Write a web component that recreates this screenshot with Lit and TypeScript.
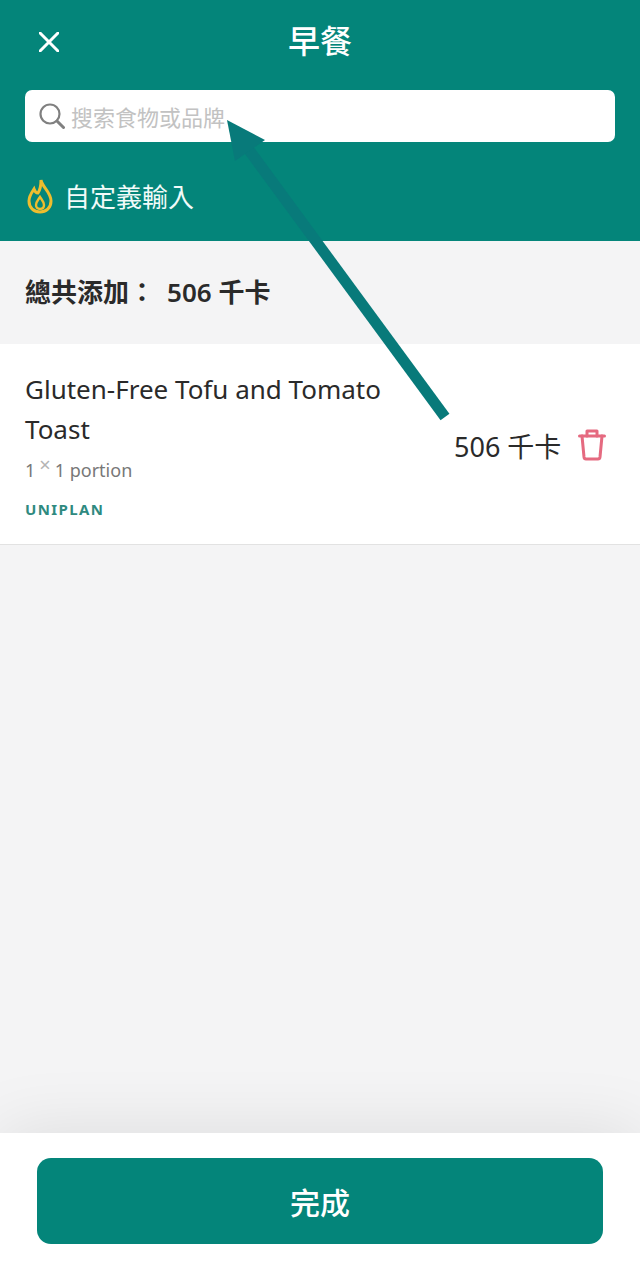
import { css, html, LitElement } from 'lit';
import { customElement } from 'lit/decorators.js';

const SANS = '"Noto Sans", "Noto Sans CJK TC", sans-serif';

@customElement('app-root')
export class AppRoot extends LitElement {
  static styles = css`
    *,
    *::after,
    *::before {
      box-sizing: border-box;
    }

    :host {
      display: flex;
      flex-direction: column;
      position: relative;
      width: 640px;
      height: 1280px;
      overflow: hidden;
      background: #f4f4f5;
      color: #2a2a2a;
      font-family: 'Noto Sans', 'Noto Sans CJK TC', sans-serif;
    }

    .header {
      height: 241px;
      padding: 0 25px;
      background: #04857a;
      color: #fff;
    }

    .title-row {
      height: 90px;
      padding-bottom: 8px;
      display: flex;
      align-items: center;
      justify-content: center;
      position: relative;
    }

    .title {
      font-size: 32px;
      font-weight: 500;
      line-height: 1;
    }

    .close {
      position: absolute;
      left: 14px;
      top: 32px;
      width: 20px;
      height: 20px;
    }

    .search {
      height: 52px;
      padding-left: 14px;
      display: flex;
      align-items: center;
      gap: 6px;
      background: #fff;
      border-radius: 7px;
      color: #c2c2c2;
      font-size: 22px;
    }

    .custom {
      height: 108px;
      display: flex;
      align-items: center;
      gap: 11px;
      padding: 0 0 0 2px;
      font-size: 26px;
      color: #f2fbf9;
    }

    .summary {
      height: 103px;
      padding: 0 25px 4px;
      display: flex;
      align-items: center;
      font-size: 26px;
      font-weight: 600;
    }

    .summary .amount {
      margin-left: 12px;
    }

    .item {
      height: 201px;
      padding: 25px 30px 0 25px;
      display: flex;
      background: #fff;
      border-bottom: 1px solid #e2e2e2;
    }

    .info {
      width: 429px;
    }

    .name {
      width: 390px;
      font-size: 26px;
      line-height: 40px;
    }

    .qty {
      margin-top: 9px;
      display: flex;
      align-items: flex-start;
      font-size: 18px;
      line-height: 24px;
      color: #787878;
    }

    .qty .times {
      margin: -5px 4px 0 4px;
      font-size: 20px;
      color: #b4b4b4;
    }

    .brand {
      margin-top: 17px;
      font-size: 15px;
      line-height: 20px;
      font-weight: 700;
      letter-spacing: 1.4px;
      color: #2f8a80;
    }

    .kcal {
      height: 152px;
      display: flex;
      align-items: center;
      gap: 17px;
      font-size: 27px;
      white-space: nowrap;
    }

    .spacer {
      flex: 1;
    }

    .footer {
      position: relative;
      height: 147px;
      padding: 25px 37px 0;
      background: #fff;
      box-shadow: 0 0 70px rgba(0, 0, 0, 0.1);
    }

    .done {
      height: 86px;
      display: flex;
      align-items: center;
      justify-content: center;
      background: #04857a;
      border-radius: 14px;
      color: #fff;
      font-size: 30px;
      font-weight: 500;
    }

    .arrow {
      position: absolute;
      left: 0;
      top: 0;
      pointer-events: none;
    }
  `;

  render() {
    return html`
      <div class="header">
        <div class="title-row">
          <svg class="close" viewBox="0 0 20 20">
            <path d="M1 1L19 19M19 1L1 19" stroke="#fff" stroke-width="3" stroke-linecap="round" />
          </svg>
          <div class="title">早餐</div>
        </div>
        <div class="search">
          <svg width="26" height="26" viewBox="0 0 26 26" fill="none" stroke="#808080">
            <circle cx="11" cy="11" r="9.5" stroke-width="2.2" />
            <path d="M18 18L24.5 24.5" stroke-width="3" stroke-linecap="round" />
          </svg>
          <span>搜索食物或品牌</span>
        </div>
        <div class="custom">
          <svg width="26" height="36" viewBox="0 0 26 36" fill="none" stroke="#eebd2e" stroke-width="3">
            <path d="M14 2C15 9 24 14 24 23C24 30 19 34 13 34C7 34 2 30 2 23C2 18 5 14 7 11C8 14 9 15 11 15C13 12 14 7 14 2Z" />
            <path d="M13 19C15 22 17 24 17 27C17 30 15 31 13 31C11 31 9 30 9 27C9 24 11 22 13 19Z" stroke-width="2.4" />
          </svg>
          <span>自定義輸入</span>
        </div>
      </div>

      <div class="summary">
        <span>總共添加：</span><span class="amount">506 千卡</span>
      </div>

      <div class="item">
        <div class="info">
          <div class="name">Gluten-Free Tofu and Tomato Toast</div>
          <div class="qty"><span>1</span><span class="times">×</span><span>1 portion</span></div>
          <div class="brand">UNIPLAN</div>
        </div>
        <div class="kcal">
          <span>506 千卡</span>
          <svg width="28" height="32" viewBox="0 0 28 32" fill="none" stroke="#e56a80" stroke-width="3" stroke-linecap="round" stroke-linejoin="round">
            <path d="M1.5 7H26.5" />
            <path d="M9 7V2H19V7" />
            <path d="M4 7L6 28C6.2 29.5 7 30 8 30H20C21 30 21.8 29.5 22 28L24 7" />
          </svg>
        </div>
      </div>

      <div class="spacer"></div>

      <div class="footer">
        <div class="done">完成</div>
      </div>

      <!-- annotation arrow lying over the whole page -->
      <svg class="arrow" width="640" height="1280" viewBox="0 0 640 1280">
        <path d="M445 417L246 146" stroke="#087a7a" stroke-width="11" />
        <path d="M227 120L265 140L235 161Z" fill="#087a7a" />
      </svg>
    `;
  }
}

void SANS;
